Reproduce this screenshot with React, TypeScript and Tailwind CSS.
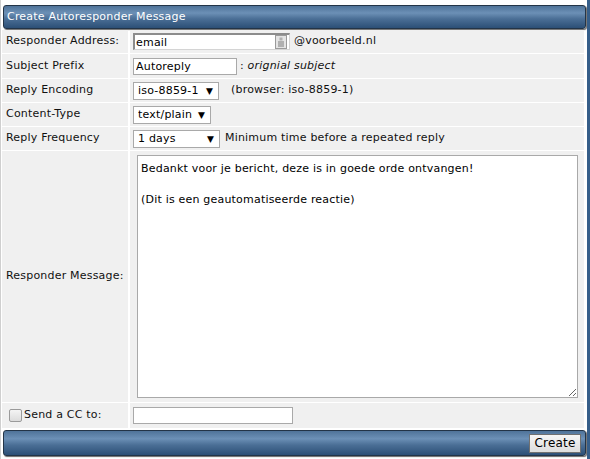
import React, { useState } from "react";

const Bar = ({ children, className = "" }: { children?: React.ReactNode; className?: string }) => (
  <div
    className={`ml-px mr-px rounded-[3px] border border-[#233447] bg-[linear-gradient(to_bottom,#4f7399_0%,#6c90b6_32%,#4b6f96_58%,#2c4f76_100%)] shadow-[1px_1px_1px_#6a6a6a] ${className}`}
  >
    {children}
  </div>
);

const Select = ({ value, width }: { value: string; width: string }) => (
  <div className={`relative h-[18px] ${width}`}>
    <select
      defaultValue={value}
      className="h-full w-full appearance-none border border-[#a9a9a9] bg-white pl-[4px] text-[11px] leading-[16px] tracking-[0.2px] text-black outline-none"
    >
      <option>{value}</option>
    </select>
    <span className="pointer-events-none absolute right-[6px] top-[2px] text-[9px] leading-[14px] text-black">▼</span>
  </div>
);

const Row = ({ label, children, h }: { label: React.ReactNode; children: React.ReactNode; h: string }) => (
  <div className={`flex gap-[2px] ${h}`}>
    <div className="flex w-[126px] shrink-0 items-center bg-[#f0f0f0] pl-[4px]">{label}</div>
    <div className="flex flex-1 items-center bg-[#f0f0f0] pl-[3px]">{children}</div>
  </div>
);

const App = () => {
  const [cc, setCc] = useState(false);
  const [message, setMessage] = useState(
    "Bedankt voor je bericht, deze is in goede orde ontvangen!\n\n(Dit is een geautomatiseerde reactie)"
  );

  return (
    <div className="flex h-[459px] w-[590px] bg-white font-['DejaVu_Sans','Verdana',sans-serif] text-[11px] tracking-[0.2px] text-[#111]">
      <div className="flex flex-1 flex-col border-l border-[#cfcfcf] pl-px pt-[5px]">
        <Bar className="flex h-[24px] items-center pl-[3px] text-white">Create Autoresponder Message</Bar>

        <div className="mr-[3px] mt-px flex flex-col gap-px">
          <Row label="Responder Address:" h="h-[23px]">
            <div className="relative h-[17px] w-[157px] border-l-2 border-t-2 border-b border-r border-l-[#8c8c8c] border-t-[#8c8c8c] border-b-[#d4d4d4] border-r-[#d4d4d4] bg-white">
              <input defaultValue="email" className="h-full w-full bg-transparent pl-px text-[11px] leading-[14px] tracking-[0.2px] text-black outline-none" />
              <svg className="pointer-events-none absolute right-[2px] top-0" width="12" height="14" viewBox="0 0 12 14">
                <rect x="0.5" y="0.5" width="11" height="13" fill="#e4e4e4" stroke="#9a9a9a" />
                <rect x="4.5" y="2.5" width="3" height="3" fill="#b0b0b0" />
                <rect x="3" y="6" width="6" height="6" fill="#b0b0b0" />
              </svg>
            </div>
            <span className="ml-[4px]">@voorbeeld.nl</span>
          </Row>

          <Row label="Subject Prefix" h="h-[24px]">
            <input
              defaultValue="Autoreply"
              className="h-[17px] w-[104px] border border-[#a9a9a9] bg-white pl-[2px] text-[11px] tracking-[0.2px] text-black outline-none"
            />
            <span className="ml-[3px]">
              : <i>orignial subject</i>
            </span>
          </Row>

          <Row label="Reply Encoding" h="h-[23px]">
            <Select value="iso-8859-1" width="w-[86px]" />
            <span className="ml-[12px]">(browser: iso-8859-1)</span>
          </Row>

          <Row label="Content-Type" h="h-[23px]">
            <Select value="text/plain" width="w-[78px]" />
          </Row>

          <Row label="Reply Frequency" h="h-[23px]">
            <Select value="1 days" width="w-[87px]" />
            <span className="ml-[5px]">Minimum time before a repeated reply</span>
          </Row>

          <div className="flex h-[251px] gap-[2px]">
            <div className="flex w-[126px] shrink-0 items-center bg-[#f0f0f0] pl-[4px]">Responder Message:</div>
            <div className="flex flex-1 bg-[#f0f0f0] py-[4px] pl-[7px] pr-[6px]">
              <textarea
                value={message}
                onChange={e => setMessage(e.target.value)}
                className="h-full w-full resize border border-[#a9a9a9] bg-white px-[3px] pt-[5px] font-['DejaVu_Sans','Verdana',sans-serif] text-[11px] leading-[15.5px] tracking-[0.2px] text-black outline-none"
              />
            </div>
          </div>

          <Row
            h="h-[25px]"
            label={
              <label className="flex items-center">
                <input
                  type="checkbox"
                  checked={cc}
                  onChange={e => setCc(e.target.checked)}
                  className="ml-[3px] mr-[1px] h-[13px] w-[13px] appearance-none rounded-[2px] border border-[#9a9a9a] bg-[linear-gradient(to_bottom,#f4f4f4,#dcdcdc)]"
                />
                <span className="ml-[1px]">Send a CC to:</span>
              </label>
            }
          >
            <input className="h-[17px] w-[160px] border border-[#a9a9a9] bg-white text-[11px] outline-none" />
          </Row>
        </div>

        <Bar className="mt-[2px] flex h-[26px] items-center justify-end pr-[4px]">
          <button className="h-[19px] w-[52px] border border-[#707070] bg-[linear-gradient(to_bottom,#f6f6f6,#dddddd)] text-[12px] leading-[16px] text-black">
            Create
          </button>
        </Bar>
      </div>
      <div className="w-[3px] bg-[#365e89]" />
    </div>
  );
};

export default App;
